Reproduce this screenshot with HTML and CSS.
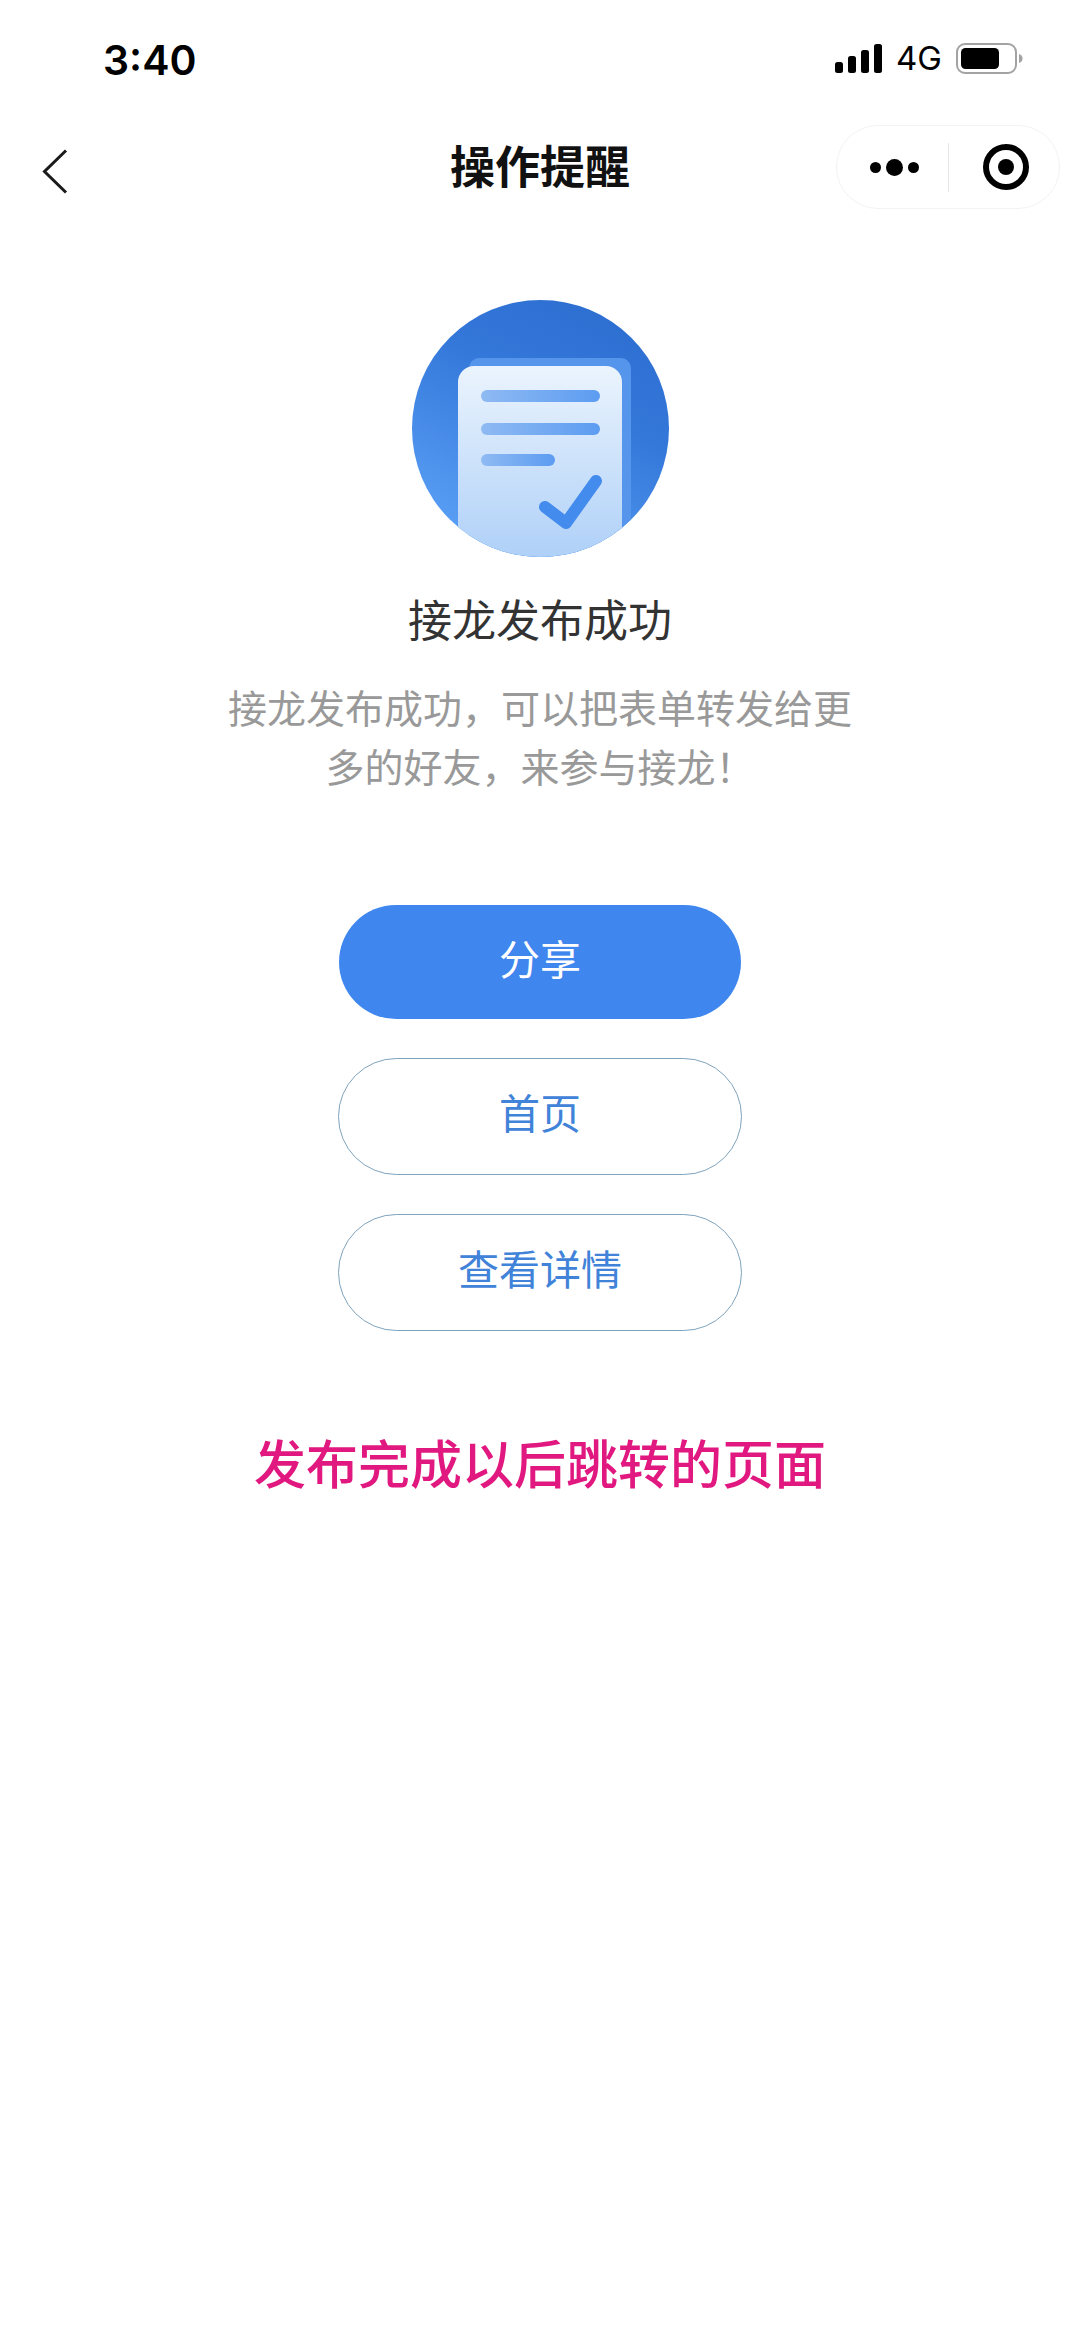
FILE: index.html
```html
<!DOCTYPE html>
<html lang="zh-CN">
<head>
    <meta charset="UTF-8">
    <title>操作提醒</title>
    <link rel="stylesheet" href="styles.css">
</head>
<body>
<div class="page">
    <!-- 状态栏 -->
    <div class="status">
        <span class="time">3:40</span>
        <div class="status-right">
            <svg class="signal" width="47" height="29" viewBox="0 0 47 29">
                <rect x="0" y="18" width="8" height="11" rx="2.5"/>
                <rect x="13" y="12" width="8" height="17" rx="2.5"/>
                <rect x="26" y="6" width="8" height="23" rx="2.5"/>
                <rect x="39" y="0" width="8" height="29" rx="2.5"/>
            </svg>
            <span class="net">4G</span>
            <svg class="battery" width="67" height="31" viewBox="0 0 67 31">
                <rect x="1" y="1" width="59" height="29" rx="8" fill="#fff" stroke="#a3a3a3" stroke-width="2"/>
                <rect x="5" y="5" width="38" height="21" rx="4.5" fill="#000"/>
                <path d="M63 11c2.5 .8 3.500 2.400 3.500 4.500s-1 3.700-3.500 4.500z" fill="#a3a3a3"/>
            </svg>
        </div>
    </div>

    <!-- 导航栏 -->
    <div class="nav">
        <div class="nav-left">
            <svg width="26" height="45" viewBox="0 0 26 45">
                <path d="M24 1.500 2.500 22.500 24 43.500" fill="none" stroke="#1a1a1a" stroke-width="3"/>
            </svg>
        </div>
        <div class="nav-title">操作提醒</div>
        <div class="nav-right">
            <div class="capsule">
                <div class="capsule-more">
                    <i class="dot"></i><i class="dot dot-big"></i><i class="dot"></i>
                </div>
                <div class="capsule-line"></div>
                <div class="capsule-close"><i></i></div>
            </div>
        </div>
    </div>

    <div class="main">
        <svg class="logo" width="259" height="259" viewBox="0 0 259 259">
            <defs>
                <linearGradient id="bg" x1="0.7" y1="0.05" x2="0.25" y2="0.95">
                    <stop offset="0" stop-color="#2e6fd2"/>
                    <stop offset="0.35" stop-color="#3478da"/>
                    <stop offset="1" stop-color="#5a9ff5"/>
                </linearGradient>
                <linearGradient id="paper" x1="0" y1="0" x2="0" y2="1">
                    <stop offset="0" stop-color="#ebf4fd"/>
                    <stop offset="1" stop-color="#afd0f8"/>
                </linearGradient>
                <linearGradient id="bar" x1="0" y1="0" x2="1" y2="0">
                    <stop offset="0" stop-color="#8fbaf3"/>
                    <stop offset="1" stop-color="#5c9cf1"/>
                </linearGradient>
                <clipPath id="round"><circle cx="129.500" cy="129.500" r="128.500"/></clipPath>
            </defs>
            <g clip-path="url(#round)">
                <rect width="259" height="259" fill="url(#bg)"/>
                <path d="M68 59h142a10 10 0 0 1 10 10v190H58V69a10 10 0 0 1 10-10z" fill="#5595ec"/>
                <path d="M47 83a16 16 0 0 1 16-16h132a16 16 0 0 1 16 16v176H47z" fill="url(#paper)"/>
                <rect x="70" y="91" width="119" height="12" rx="6" fill="url(#bar)"/>
                <rect x="70" y="124" width="119" height="12" rx="6" fill="url(#bar)"/>
                <rect x="70" y="155" width="74" height="12" rx="6" fill="url(#bar)"/>
                <path d="M134 208 155 224 185 182" fill="none" stroke="#448bee" stroke-width="12" stroke-linecap="round" stroke-linejoin="round"/>
            </g>
        </svg>
        <h1 class="title">接龙发布成功</h1>
        <p class="desc">接龙发布成功，可以把表单转发给更<br>多的好友，来参与接龙！</p>
        <div class="btns">
            <div class="btn btn-primary">分享</div>
            <div class="btn">首页</div>
            <div class="btn">查看详情</div>
        </div>
        <p class="note">发布完成以后跳转的页面</p>
    </div>
</div>
</body>
</html>
```

FILE: styles.css
```css
*{
    margin: 0;
    padding: 0;
    box-sizing: border-box;
}
body{
    background: #fff;
    font-family: "Noto Sans CJK SC", "Liberation Sans", sans-serif;
}
.page{
    width: 1080px;
    height: 2337px;
    overflow: hidden;
}
.status{
    height: 120px;
    padding: 43px 57px 0 103px;
    display: flex;
    justify-content: space-between;
    align-items: flex-start;
}
.time{
    font-family: Inter, "Liberation Sans", sans-serif;
    font-size: 41px;
    line-height: 34px;
    font-weight: 600;
    color: #000;
}
.status-right{
    display: flex;
    align-items: center;
    height: 31px;
}
.net{
    font-family: Inter, "Liberation Sans", sans-serif;
    font-size: 33px;
    line-height: 31px;
    color: #000;
    margin: 0 14px 0 14px;
}
.nav{
    height: 94px;
    padding: 0 20px;
    display: grid;
    grid-template-columns: 1fr auto 1fr;
    align-items: center;
}
.nav-left{
    display: flex;
    align-items: center;
    padding: 8px 0 0 22px;
}
.nav-title{
    font-size: 45px;
    font-weight: 700;
    line-height: 60px;
    margin-top: -4px;
    color: #111;
}
.nav-right{
    display: flex;
    justify-content: flex-end;
}
.capsule{
    width: 224px;
    height: 84px;
    border: 1px solid #f3f3f3;
    border-radius: 42px;
    display: flex;
    align-items: center;
}
.capsule-more{
    width: 111px;
    padding-left: 3px;
    display: flex;
    justify-content: center;
    align-items: center;
    gap: 5px;
}
.dot{
    width: 11px;
    height: 11px;
    border-radius: 50%;
    background: #000;
}
.dot-big{
    width: 17px;
    height: 17px;
}
.capsule-line{
    width: 1px;
    height: 49px;
    background: #e6e6e6;
}
.capsule-close{
    flex: 1;
    display: flex;
    justify-content: center;
    padding-left: 4px;
}
.capsule-close i{
    width: 46px;
    height: 46px;
    border: 6px solid #000;
    border-radius: 50%;
    display: flex;
    justify-content: center;
    align-items: center;
}
.capsule-close i::after{
    content: "";
    width: 16px;
    height: 16px;
    border-radius: 50%;
    background: #000;
}
.main{
    padding-top: 85px;
    display: flex;
    flex-direction: column;
    align-items: center;
}
.logo{
    display: block;
}
.title{
    margin-top: 30px;
    font-size: 44px;
    font-weight: 400;
    line-height: 60px;
    color: #333;
}
.desc{
    margin-top: 29px;
    font-size: 39px;
    line-height: 59px;
    color: #999;
    text-align: center;
}
.btns{
    margin-top: 110px;
    display: flex;
    flex-direction: column;
    align-items: center;
    gap: 39px;
}
.btn{
    width: 404px;
    height: 117px;
    border: 1px solid #7fa3bd;
    border-radius: 59px;
    font-size: 41px;
    line-height: 105px;
    color: #4083d9;
    text-align: center;
}
.btn-primary{
    width: 402px;
    height: 114px;
    border: none;
    background: #3f86ee;
    color: #fff;
}
.note{
    margin-top: 95px;
    font-size: 52px;
    font-weight: 500;
    line-height: 72px;
    color: #e0187f;
}
```
